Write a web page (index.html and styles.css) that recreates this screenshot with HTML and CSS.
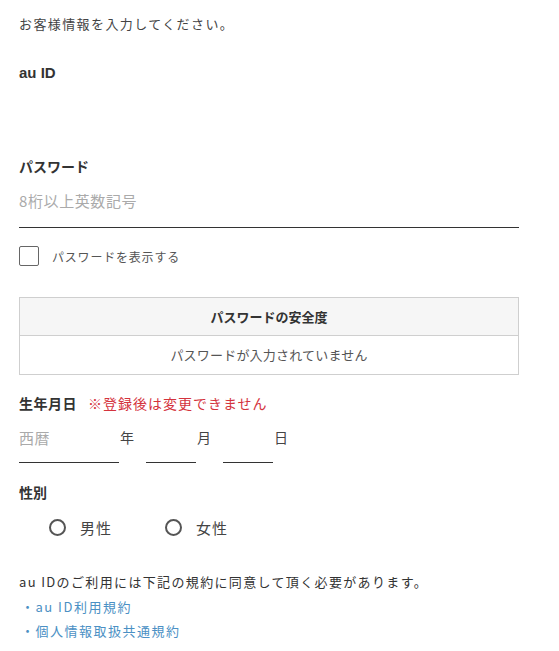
FILE: index.html
```html
<!DOCTYPE html>
<html lang="ja">
<head>
<meta charset="utf-8">
<link rel="stylesheet" href="styles.css">
</head>
<body>
<div class="page">
  <p class="intro">お客様情報を入力してください。</p>

  <div class="label label-auid">au ID</div>
  <div class="auid-space"></div>

  <div class="label label-pw">パスワード</div>
  <div class="pw-field"><span class="placeholder">8桁以上英数記号</span></div>

  <label class="check-row">
    <span class="checkbox"></span>
    <span class="check-text">パスワードを表示する</span>
  </label>

  <div class="strength">
    <div class="strength-head">パスワードの安全度</div>
    <div class="strength-body">パスワードが入力されていません</div>
  </div>

  <div class="label label-birth">生年月日<span class="note">※登録後は変更できません</span></div>
  <div class="birth-row">
    <div class="birth-field year"><span class="placeholder">西暦</span></div>
    <span class="unit">年</span>
    <div class="birth-field small"></div>
    <span class="unit">月</span>
    <div class="birth-field small"></div>
    <span class="unit">日</span>
  </div>

  <div class="label label-sex">性別</div>
  <div class="radio-row">
    <label class="radio"><span class="circle"></span><span class="radio-text">男性</span></label>
    <label class="radio"><span class="circle"></span><span class="radio-text">女性</span></label>
  </div>

  <p class="terms">au IDのご利用には下記の規約に同意して頂く必要があります。</p>
  <ul class="links">
    <li><a href="#">・au ID利用規約</a></li>
    <li><a href="#">・個人情報取扱共通規約</a></li>
  </ul>
</div>
</body>
</html>
```
FILE: styles.css
```css
* { box-sizing: border-box; }
html, body { margin: 0; padding: 0; background: #fff; }
body {
  font-family: "Noto Sans CJK JP", "Noto Sans", sans-serif;
  color: #333;
}
.page { padding: 14px 40px 0 19px; }
.intro {
  margin: 0;
  font-size: 13px;
  line-height: 20px;
  letter-spacing: 1.4px;
  color: #444;
}
.label {
  font-size: 14px;
  font-weight: bold;
  line-height: 20px;
  color: #333;
}
.label-auid { margin-top: 29px; font-family: "Liberation Sans", "Noto Sans CJK JP", sans-serif; font-size: 15px; }
.auid-space { height: 73px; }
.pw-field {
  height: 52px;
  border-bottom: 1px solid #333;
  padding-top: 12px;
}
.placeholder {
  font-size: 15px;
  line-height: 24px;
  color: #aaa;
  letter-spacing: 0.6px;
}
.check-row {
  display: flex;
  align-items: center;
  margin-top: 17px;
  height: 22px;
}
.checkbox {
  width: 20px;
  height: 20px;
  border: 1px solid #666;
  border-radius: 2px;
}
.check-text {
  margin-left: 13px;
  font-size: 12px;
  letter-spacing: 0.8px;
  color: #555;
}
.strength {
  margin-top: 30px;
  border: 1px solid #cfcfcf;
  text-align: center;
  font-size: 13px;
}
.strength-head {
  height: 38px;
  line-height: 38px;
  background: #f6f6f6;
  border-bottom: 1px solid #cfcfcf;
  font-weight: bold;
  color: #333;
}
.strength-body {
  height: 38px;
  line-height: 38px;
  color: #555;
  letter-spacing: 0.2px;
}
.label-birth { margin-top: 18px; letter-spacing: 0.5px; }
.note {
  margin-left: 11px;
  font-weight: normal;
  color: #d4333d;
  letter-spacing: 1px;
}
.birth-row {
  display: flex;
  align-items: flex-end;
  margin-top: 10px;
}
.birth-field {
  height: 40px;
  border-bottom: 1px solid #333;
  padding-top: 2px;
}
.birth-field.year { width: 100px; }
.birth-field.small { width: 50px; }
.unit {
  width: 27px;
  align-self: flex-start;
  padding-top: 2px;
  padding-left: 1px;
  font-size: 14px;
  line-height: 24px;
  color: #444;
}
.label-sex { margin-top: 19px; }
.radio-row {
  display: flex;
  margin-top: 15px;
  padding-left: 30px;
  height: 20px;
  align-items: center;
}
.radio { display: flex; align-items: center; width: 116px; }
.circle {
  width: 17px;
  height: 17px;
  border: 2px solid #555;
  border-radius: 50%;
}
.radio-text {
  margin-left: 14px;
  font-size: 15px;
  letter-spacing: 1px;
  color: #444;
}
.terms {
  margin: 34px 0 0;
  font-size: 13px;
  line-height: 22px;
  letter-spacing: 1.35px;
  color: #333;
}
.links { list-style: none; margin: 2px 0 0; padding: 0 0 0 2px; }
.links li { line-height: 24px; font-size: 13px; letter-spacing: 1.5px; }
.links a { color: #4b90c4; text-decoration: none; }
```
